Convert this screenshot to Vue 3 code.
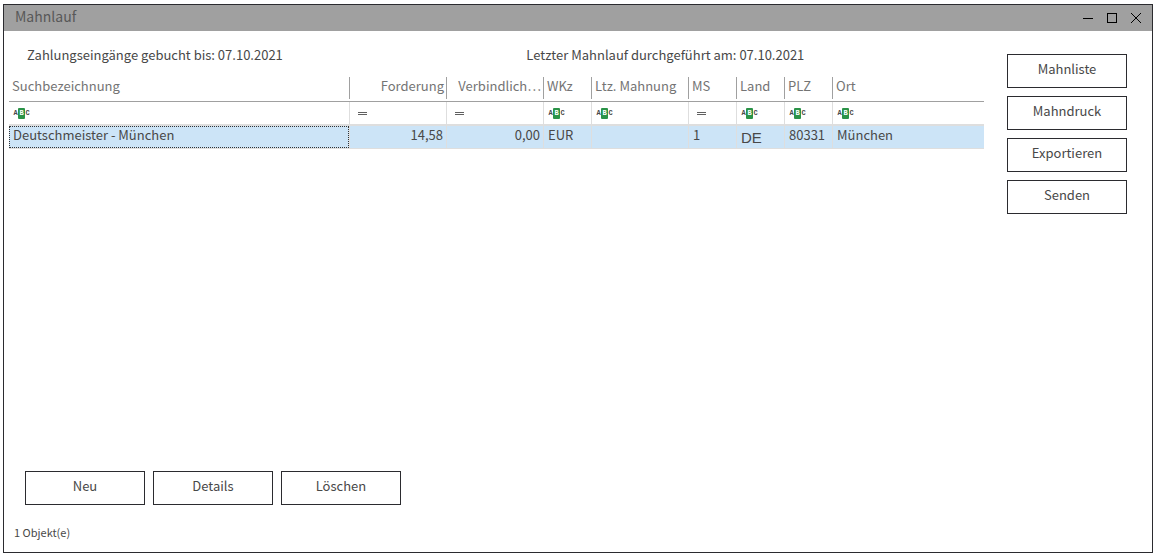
<script setup>
const columns = [
  { key: 'name', label: 'Suchbezeichnung', filter: 'text' },
  { key: 'amount', label: 'Forderung', filter: 'equals', align: 'right' },
  { key: 'debt', label: 'Verbindlich…', filter: 'equals', align: 'right' },
  { key: 'currency', label: 'WKz', filter: 'text' },
  { key: 'last', label: 'Ltz. Mahnung', filter: 'text' },
  { key: 'level', label: 'MS', filter: 'equals' },
  { key: 'country', label: 'Land', filter: 'text' },
  { key: 'zip', label: 'PLZ', filter: 'text' },
  { key: 'city', label: 'Ort', filter: 'text' },
]
const rows = [
  { name: 'Deutschmeister - München', amount: '14,58', debt: '0,00', currency: 'EUR', last: '', level: '1', country: 'DE', zip: '80331', city: 'München' },
]
const sideActions = ['Mahnliste', 'Mahndruck', 'Exportieren', 'Senden']
const rowActions = ['Neu', 'Details', 'Löschen']
</script>

<template>
  <div class="desktop">
    <main class="window">
      <header class="titlebar">
        <h1>Mahnlauf</h1>
        <div class="controls">
          <button type="button" aria-label="Minimieren">
            <svg width="10" height="10" shape-rendering="crispEdges"><rect y="5" width="10" height="1" /></svg>
          </button>
          <button type="button" aria-label="Maximieren">
            <svg width="10" height="10" shape-rendering="crispEdges"><path d="M.5 .5h9v9h-9z" fill="none" stroke="#000" /></svg>
          </button>
          <button type="button" aria-label="Schließen">
            <svg width="10" height="10"><path d="M0 0L10 10M10 0L0 10" fill="none" stroke="#000" /></svg>
          </button>
        </div>
      </header>

      <div class="content">
        <section class="list">
          <div class="info">
            <span>Zahlungseingänge gebucht bis: 07.10.2021</span>
            <span>Letzter Mahnlauf durchgeführt am: 07.10.2021</span>
          </div>
          <table>
            <colgroup>
              <col v-for="c in columns" :key="c.key" :class="'col-' + c.key" />
            </colgroup>
            <thead>
              <tr class="heads">
                <th v-for="c in columns" :key="c.key" scope="col" :class="c.align">{{ c.label }}</th>
              </tr>
              <tr class="filters">
                <td v-for="c in columns" :key="c.key">
                  <button type="button" class="filter" :class="c.filter" :aria-label="'Filter ' + c.label">
                    <span v-if="c.filter === 'text'" class="abc"><i>A</i><b>B</b><i>C</i></span>
                    <span v-else class="equals-sign"></span>
                  </button>
                </td>
              </tr>
            </thead>
            <tbody>
              <tr v-for="r in rows" :key="r.name" class="selected">
                <td v-for="c in columns" :key="c.key">
                  <span class="cell" :class="[c.align, 'cell-' + c.key]">{{ r[c.key] }}</span>
                </td>
              </tr>
            </tbody>
          </table>
        </section>
        <aside class="side">
          <button v-for="a in sideActions" :key="a" type="button" class="action">{{ a }}</button>
        </aside>
      </div>

      <div class="actions">
        <button v-for="a in rowActions" :key="a" type="button" class="action">{{ a }}</button>
      </div>
      <footer class="status">1 Objekt(e)</footer>
    </main>
  </div>
</template>

<style>
body {
  background: #fff;
}
</style>

<style scoped>
* {
  box-sizing: border-box;
}
.desktop {
  display: flex;
  min-height: 100vh;
  padding: 4px 5px 6px 3px;
  font-family: "Noto Sans CJK KR", "Open Sans", sans-serif;
  font-size: 13px;
  line-height: 20px;
  color: #484848;
}
button {
  font: inherit;
  color: inherit;
  padding: 0;
  border: 0;
  background: none;
}
.window {
  flex: 1;
  min-width: 0;
  display: flex;
  flex-direction: column;
  border: 1px solid #2b2b2f;
  background: #fff;
}
.titlebar {
  display: flex;
  align-items: center;
  justify-content: space-between;
  height: 26px;
  padding: 0 11px;
  background: #a0a0a0;
}
h1 {
  margin: 0;
  padding-bottom: 4px;
  font-size: 14px;
  font-weight: 400;
  color: #585858;
}
.controls {
  display: flex;
  gap: 14px;
}
.controls button {
  width: 10px;
  height: 10px;
}
.controls svg {
  display: block;
}
.content {
  flex: 1;
  display: flex;
  gap: 23px;
  padding: 0 25px 0 5px;
}
.list {
  flex: 1;
  min-width: 0;
}
.info {
  display: grid;
  grid-template-columns: 12fr 11fr;
  padding: 14px 0 12px 18px;
}
table {
  width: 100%;
  table-layout: fixed;
  border-collapse: separate;
  border-spacing: 0;
}
.col-name {
  width: 341px;
}
.col-amount,
.col-debt,
.col-last {
  width: 97px;
}
.col-currency,
.col-level,
.col-country,
.col-zip {
  width: 48px;
}
th {
  height: 25px;
  padding: 0 3px 6px;
  border-bottom: 1px solid #a0a0a0;
  background: linear-gradient(#a0a0a0, #a0a0a0) right top / 1px 22px no-repeat;
  font-weight: 400;
  line-height: 18px;
  text-align: left;
  color: #747474;
  white-space: nowrap;
}
th:last-child {
  background: none;
}
td {
  padding: 0;
  border-right: 1px solid #dedede;
  border-bottom: 1px solid #dedede;
  white-space: nowrap;
}
td:last-child {
  border-right: 0;
}
.filters td {
  height: 23px;
}
.filter {
  display: flex;
  align-items: center;
  width: 100%;
  height: 22px;
  padding-left: 5px;
}
.filter.equals {
  padding-left: 8px;
}
.abc {
  display: flex;
  align-items: center;
  gap: 1px;
  font: 700 7px/11px "Liberation Mono", monospace;
}
.abc i,
.abc b {
  display: flex;
  justify-content: center;
}
.abc i {
  width: 3px;
  font-style: normal;
}
.abc b {
  width: 7px;
  height: 11px;
  border-radius: 1px;
  background: #2b9348;
  color: #fff;
}
.equals-sign {
  width: 9px;
  height: 3px;
  border: solid #606060;
  border-width: 1px 0;
}
.selected td {
  height: 24px;
  border-top: 1px solid #dedede;
  background: #cce4f7;
}
.cell {
  display: block;
  height: 22px;
  padding: 0 4px;
  line-height: 18px;
}
.cell-name {
  padding: 0 3px;
  border: 1px dotted #333;
  line-height: 16px;
}
.cell-country {
  font-family: "Liberation Sans", Arial, sans-serif;
  font-size: 15px;
  line-height: 24px;
}
.right {
  text-align: right;
  padding-right: 3px;
}
.side {
  display: flex;
  flex-direction: column;
  gap: 8px;
  padding-top: 23px;
}
.action {
  width: 120px;
  height: 34px;
  padding-bottom: 4px;
  border: 1px solid #2b2b2f;
  background: #fff;
}
.actions {
  display: flex;
  gap: 8px;
  padding: 0 21px;
}
.status {
  padding: 17px 10px 10px;
  font-size: 11px;
}
</style>
